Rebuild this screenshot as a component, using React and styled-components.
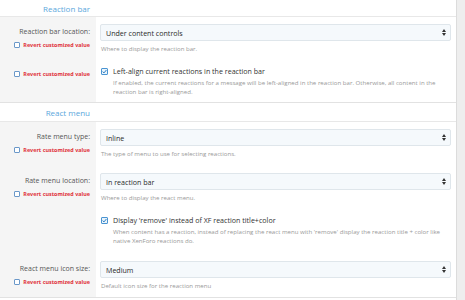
import React from "react";
import styled, { createGlobalStyle } from "styled-components";

const GlobalStyle = createGlobalStyle`
  html, body {
    margin: 0;
    padding: 0;
    background: #fff;
  }
  body {
    font-family: "Open Sans", "Noto Sans", sans-serif;
    color: #141414;
  }
`;

const Page = styled.div`
  display: flex;
  width: 465px;
  height: 300px;
  overflow: hidden;
`;

const Main = styled.div`
  flex: 1;
  background: #fff;
`;

const Strip = styled.div`
  width: 8px;
  background: #eeeeee;
  border-left: 1px solid #dcdcdc;
`;

const SectionHeader = styled.div`
  display: grid;
  grid-template-columns: 96px 1fr;
  height: ${(p) => p.$h}px;
  border-top: ${(p) => (p.$top ? "1px solid #e2e2e2" : "none")};
  border-bottom: 1px solid #e8e8e8;

  h2 {
    margin: 0;
    font-size: 8px;
    font-weight: 400;
    color: #5aa7dc;
    text-align: right;
    padding-right: 6px;
    align-self: center;
    white-space: nowrap;
  }
`;

const Row = styled.div`
  display: grid;
  grid-template-columns: 96px 1fr;
  height: ${(p) => p.$h}px;
  border-bottom: ${(p) => (p.$last ? "1px solid #e2e2e2" : "none")};
`;

const Term = styled.div`
  background: #f5f5f5;
  text-align: right;
  padding: ${(p) => p.$pt}px 6px 0 0;
  display: flex;
  flex-direction: column;
  align-items: flex-end;
  gap: 2px;
`;

const Label = styled.div`
  font-size: 7px;
  line-height: 12px;
  color: #555;
  white-space: nowrap;
`;

const Revert = styled.label`
  display: flex;
  align-items: center;
  gap: 3px;
  font-size: 5.45px;
  line-height: 10px;
  font-weight: 700;
  color: #e0323a;
  white-space: nowrap;
`;

const RevertBox = styled.span`
  width: 4px;
  height: 4px;
  border: 1px solid #6a98c9;
  background: #fff;
  border-radius: 1px;
`;

const Desc = styled.div`
  padding: ${(p) => p.$pt}px 5px 0 4px;
`;

const Select = styled.div`
  height: 17px;
  box-sizing: border-box;
  border: 1px solid #dfe6eb;
  background: #f5f9fc;
  border-radius: 2px;
  display: flex;
  align-items: center;
  justify-content: space-between;
  padding: 0 4px 0 5px;
  font-size: 7.1px;
  color: #2a2a2a;
`;

const Hint = styled.div`
  margin-top: ${(p) => p.$mt || 0}px;
  padding-left: ${(p) => (p.$indent ? 13 : 1)}px;
  font-size: 6.1px;
  line-height: 9px;
  color: #999;
  white-space: nowrap;
`;

const Check = styled.label`
  display: flex;
  align-items: center;
  gap: 5px;
  font-size: 7.1px;
  line-height: 11px;
  color: #333;
  white-space: nowrap;
`;

const CheckBox = styled.span`
  width: 7px;
  height: 7px;
  box-sizing: border-box;
  border: 1px solid #4a94d2;
  background: #eaf4fb;
  border-radius: 1px;
  display: flex;
  align-items: center;
  justify-content: center;
  margin-left: 1px;
`;

const Arrows = () => (
  <svg width="4" height="7" viewBox="0 0 4 7">
    <path d="M0 3 L2 0 L4 3 Z M0 4 L2 7 L4 4 Z" fill="#333" />
  </svg>
);

const Tick = () => (
  <svg width="5" height="5" viewBox="0 0 5 5">
    <path d="M0.6 2.6 L2 3.9 L4.4 1" fill="none" stroke="#2f7fc4" strokeWidth="1" />
  </svg>
);

const SelectRow = ({ h, label, value, hint, last }) => (
  <Row $h={h} $last={last}>
    <Term $pt={9}>
      <Label>{label}</Label>
      <Revert>
        <RevertBox />
        Revert customized value
      </Revert>
    </Term>
    <Desc $pt={7}>
      <Select>
        {value}
        <Arrows />
      </Select>
      <Hint $mt={3}>{hint}</Hint>
    </Desc>
  </Row>
);

const CheckRow = ({ h, revert, label, hint }) => (
  <Row $h={h}>
    <Term $pt={8}>
      {revert && (
        <Revert>
          <RevertBox />
          Revert customized value
        </Revert>
      )}
    </Term>
    <Desc $pt={5}>
      <Check>
        <CheckBox>
          <Tick />
        </CheckBox>
        {label}
      </Check>
      <Hint $indent $mt={1}>
        {hint.map((line) => (
          <div key={line}>{line}</div>
        ))}
      </Hint>
    </Desc>
  </Row>
);

export default function App() {
  return (
    <Page>
      <GlobalStyle />
      <Main>
        <SectionHeader $h={16}>
          <h2>Reaction bar</h2>
        </SectionHeader>
        <SelectRow
          h={44}
          label="Reaction bar location:"
          value="Under content controls"
          hint="Where to display the reaction bar."
        />
        <CheckRow
          h={41}
          revert
          label="Left-align current reactions in the reaction bar"
          hint={[
            "If enabled, the current reactions for a message will be left-aligned in the reaction bar. Otherwise, all content in the",
            "reaction bar is right-aligned.",
          ]}
        />
        <SectionHeader $h={18} $top>
          <h2>React menu</h2>
        </SectionHeader>
        <SelectRow
          h={44}
          label="Rate menu type:"
          value="Inline"
          hint="The type of menu to use for selecting reactions."
        />
        <SelectRow
          h={44}
          label="Rate menu location:"
          value="In reaction bar"
          hint="Where to display the react menu."
        />
        <CheckRow
          h={44}
          label="Display 'remove' instead of XF reaction title+color"
          hint={[
            "When content has a reaction, instead of replacing the react menu with 'remove' display the reaction title + color like",
            "native XenForo reactions do.",
          ]}
        />
        <SelectRow
          h={43}
          last
          label="React menu icon size:"
          value="Medium"
          hint="Default icon size for the reaction menu"
        />
      </Main>
      <Strip />
    </Page>
  );
}
